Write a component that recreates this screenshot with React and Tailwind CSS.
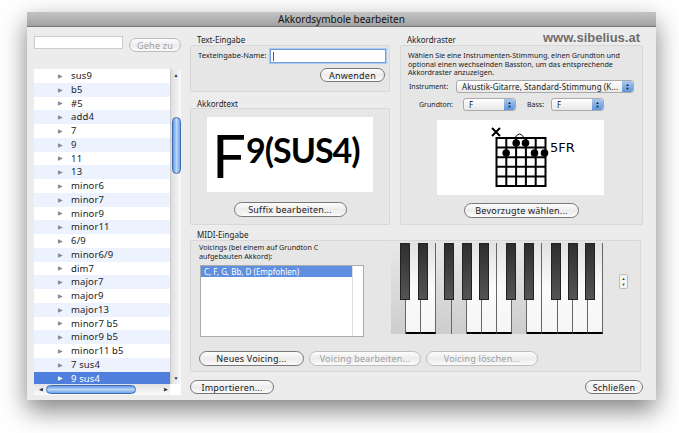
const akkorde = ["sus9", "b5", "#5", "add4", "7", "9", "11", "13", "minor6", "minor7", "minor9", "minor11", "6/9", "minor6/9", "dim7", "major7", "major9", "major13", "minor7 b5", "minor9 b5", "minor11 b5", "7 sus4", "9 sus4"];

const blackKeys = ["left-[9px]", "left-[27px]", "left-[53px]", "left-[71px]", "left-[88px]", "left-[115px]", "left-[133px]", "left-[160px]", "left-[177px]", "left-[194px]"];
const whiteKeys = [1, 0, 0, 1, 1, 0, 0, 0, 1, 0, 0, 0, 0, 0];

const Btn = ({ children, disabled, className = "" }) => (
  <div
    className={`flex items-center justify-center whitespace-nowrap rounded-full border bg-gradient-to-b from-[#fdfdfd] via-[#ececec] to-[#fbfbfb] text-[9px] tracking-[0.2px] leading-none ${disabled ? "border-[#bdbdbd] text-[#a0a0a0]" : "border-[#777] text-[#222]"} ${className}`}
  >
    {children}
  </div>
);

const Select = ({ children, className = "" }) => (
  <div className={`flex h-[13px] items-center justify-between rounded-[3px] border border-[#aaa] bg-gradient-to-b from-white to-[#e8e8e8] pl-[5px] text-[8px] tracking-[0.1px] leading-none text-[#222] ${className}`}>
    <span className="whitespace-nowrap">{children}</span>
    <span className="flex h-full w-[11px] shrink-0 flex-col items-center justify-center rounded-r-[3px] bg-gradient-to-b from-[#a9c8f0] to-[#5e94dc] text-[4px] leading-[4px] text-[#111]">
      <span>▲</span>
      <span>▼</span>
    </span>
  </div>
);

const Group = ({ className = "", children }) => (
  <div className={`rounded-[2px] border border-[#d8d8d8] bg-[#e6e6e6] ${className}`}>{children}</div>
);

const Griffbild = () => (
  <svg width="110" height="66" viewBox="-5 0 110 66">
    <path d="M21 3l8 8M29 3l-8 8" stroke="#000" strokeWidth="2" fill="none" />
    <path d="M44.500 12q4-6 8 0" stroke="#000" strokeWidth="1" fill="none" />
    <path d="M25.500 13h49v48h-49zM25.500 22.600h49M25.500 32.200h49M25.500 41.800h49M25.500 51.400h49M35.300 13v48M45.100 13v48M54.900 13v48M64.700 13v48" stroke="#000" strokeWidth="2" fill="none" />
    <circle cx="35.200" cy="28" r="3.800" />
    <circle cx="45.200" cy="18" r="3.800" />
    <circle cx="54.500" cy="18" r="3.800" />
    <circle cx="63.500" cy="28" r="3.800" />
    <circle cx="73.500" cy="28" r="3.800" />
    <text x="79" y="27" fontSize="13" fontFamily="DejaVu Sans, sans-serif">5FR</text>
  </svg>
);

export default function App() {
  return (
    <div className="h-[433px] w-[679px] overflow-hidden bg-white pl-[27px] pt-[12px] font-['Noto_Sans',sans-serif] text-[#222]">
      <div className="h-[388px] w-[629px] bg-[#ececec] shadow-[0_10px_24px_rgba(0,0,0,0.5)]">
        <div className="flex h-[15px] items-center justify-center border-b border-[#777] bg-gradient-to-b from-[#c4c4c4] to-[#a2a2a2] text-[10px] leading-none text-[#111]">
          Akkordsymbole bearbeiten
        </div>

        <div className="flex pl-[7px]">
          {/* Liste links */}
          <div className="w-[147px] shrink-0 pt-[9px]">
            <div className="flex items-start">
              <div className="h-[13px] w-[89px] border border-[#ccc] bg-white" />
              <Btn disabled className="ml-[6px] mt-[2px] h-[14px] w-[52px]">Gehe zu</Btn>
            </div>
            <div className="mt-[17px] flex h-[315px]">
              <div className="h-full w-[136px] bg-white">
                {akkorde.map((a, i) => (
                  <div
                    key={a}
                    className={`flex h-[13.75px] items-center pl-[24px] text-[9.500px] leading-none tracking-[0.1px] ${a === "9 sus4" ? "bg-[#4f7fdc] text-white" : i % 2 ? "bg-[#edf3fe] text-[#222]" : "bg-white text-[#222]"}`}
                  >
                    <span className={`mr-[8px] text-[6px] ${a === "9 sus4" ? "text-white" : "text-[#888]"}`}>▶</span>
                    {a}
                  </div>
                ))}
              </div>
              <div className="flex h-[315px] w-[11px] flex-col items-center border-l border-[#ccc] bg-gradient-to-r from-[#dedede] to-[#fafafa]">
                <span className="mt-[2px] text-[5px] leading-[8px] text-[#333]">▲</span>
                <div className="mt-[38px] h-[57px] w-[9px] rounded-full border border-[#3d6eb5] bg-gradient-to-r from-[#5f97e3] via-[#bcd6f6] to-[#6fa3e8]" />
                <span className="mt-auto mb-[2px] text-[5px] leading-[8px] text-[#333]">▼</span>
              </div>
            </div>
            <div className="flex h-[11px] w-[147px] items-center bg-white">
              <div className="flex h-full w-[136px] items-center bg-gradient-to-b from-[#e2e2e2] to-[#fbfbfb]">
                <span className="ml-[5px] text-[5px] leading-none text-[#333]">◀</span>
                <div className="ml-[3px] h-[9px] w-[90px] rounded-full border border-[#3d6eb5] bg-gradient-to-b from-[#5f97e3] via-[#bcd6f6] to-[#6fa3e8]" />
                <span className="ml-auto mr-[2px] text-[5px] leading-none text-[#333]">▶</span>
              </div>
            </div>
          </div>

          {/* rechte Seite */}
          <div className="ml-[9px] w-[453px] pt-[8px]">
            <div className="flex gap-[10px]">
              <div className="w-[200px]">
                <div className="h-[10px] pl-[7px] text-[8px] leading-[10px]">Text-Eingabe</div>
                <Group className="h-[47px]">
                  <div className="flex items-center pl-[7px] pt-[3px]">
                    <span className="w-[72px] whitespace-nowrap text-[7.500px] leading-none">Texteingabe-Name:</span>
                    <div className="flex h-[14px] w-[116px] items-center border border-[#6f9fdc] bg-white pl-[2px] shadow-[0_0_0_1px_#a9c8ee]">
                      <div className="h-[9px] w-px bg-[#555]" />
                    </div>
                  </div>
                  <div className="mt-[5px] flex justify-end pr-[4px]">
                    <Btn className="h-[14px] w-[65px]">Anwenden</Btn>
                  </div>
                </Group>
                <div className="mt-[7px] h-[9px] pl-[7px] text-[8px] leading-[9px]">Akkordtext</div>
                <Group className="h-[117px] px-[16px] pt-[8px]">
                  <div className="flex h-[75px] w-[166px] items-center overflow-hidden bg-white pl-[5px] font-['Lato',sans-serif] leading-none text-black">
                    <span className="text-[60px]">F</span>
                    <span className="-mt-[10px] text-[34px] font-bold tracking-[-1px]">9(SUS4)</span>
                  </div>
                  <div className="mt-[10px] flex justify-center">
                    <Btn className="h-[15px] w-[113px]">Suffix bearbeiten...</Btn>
                  </div>
                </Group>
              </div>

              <div className="w-[243px]">
                <div className="flex h-[10px] items-center justify-between pl-[7px] pr-[3px]">
                  <span className="text-[8px] leading-none">Akkordraster</span>
                  <span className="-mt-[5px] font-['Liberation_Sans',sans-serif] text-[13px] font-bold leading-none text-[#6e6e6e]">www.sibelius.at</span>
                </div>
                <Group className="h-[180px] px-[7px] pt-[5px]">
                  <p className="whitespace-nowrap text-[7.200px] leading-[8.700px]">
                    Wählen Sie eine Instrumenten-Stimmung, einen Grundton und
                    <br />
                    optional einen wechselnden Basston, um das entsprechende
                    <br />
                    Akkordraster anzuzeigen.
                  </p>
                  <div className="mt-[3px] flex items-center">
                    <span className="w-[48px] pl-[1px] text-[7px] leading-none">Instrument:</span>
                    <Select className="w-[178px]">Akustik-Gitarre, Standard-Stimmung (K...</Select>
                  </div>
                  <div className="mt-[5px] flex items-center">
                    <span className="w-[55px] pl-[11px] text-[7px] leading-none">Grundton:</span>
                    <Select className="w-[53px]">F</Select>
                    <span className="ml-[11px] w-[24px] text-[7px] leading-none">Bass:</span>
                    <Select className="w-[53px]">F</Select>
                  </div>
                  <div className="ml-[29px] mt-[9px] flex h-[75px] w-[167px] items-center justify-center bg-white">
                    <Griffbild />
                  </div>
                  <div className="mt-[8px] flex justify-center">
                    <Btn className="h-[15px] w-[115px]">Bevorzugte wählen...</Btn>
                  </div>
                </Group>
              </div>
            </div>

            <div className="mt-[5px] h-[10px] pl-[7px] text-[8px] leading-[10px]">MIDI-Eingabe</div>
            <Group className="flex h-[132px] w-[451px]">
              <div className="w-[200px] shrink-0 pl-[8px] pt-[2px]">
                <p className="text-[7.200px] leading-[8.500px]">
                  Voicings (bei einem auf Grundton C
                  <br />
                  aufgebauten Akkord):
                </p>
                <div className="ml-[1px] mt-[5px] flex h-[72px] w-[164px] border border-[#aaa] bg-white">
                  <div className="flex-1">
                    <div className="flex h-[11px] items-center bg-[#5f8fe0] pl-[3px] text-[8px] leading-none text-white">
                      C, F, G, Bb, D (Empfohlen)
                    </div>
                  </div>
                  <div className="w-[11px] border-l border-[#ddd]" />
                </div>
              </div>
              <div className="relative mt-[2px] h-[91px] w-[212px] shrink-0">
                <div className="flex h-full">
                  {whiteKeys.map((gedrueckt, i) => (
                    <div
                      key={i}
                      className={`h-full flex-1 border-r border-[#666] ${gedrueckt ? "bg-gradient-to-b from-[#e8e8e8] to-[#cdcdcd]" : "border-b-2 border-b-black bg-gradient-to-b from-[#e2e2e2] via-[#fbfbfb] to-[#f6f6f6]"}`}
                    />
                  ))}
                </div>
                {blackKeys.map((k) => (
                  <div key={k} className={`absolute top-0 h-[57px] w-[10px] border border-[#222] bg-gradient-to-b from-[#2e2e2e] to-[#555] ${k}`} />
                ))}
              </div>
              <div className="ml-[16px] mt-[33px] flex h-[15px] w-[9px] flex-col items-center justify-center gap-[1px] rounded-[2px] border border-[#bbb] bg-[#f5f5f5] text-[4px] leading-[5px] text-[#333]">
                <span>▲</span>
                <span>▼</span>
              </div>
            </Group>
            <div className="-mt-[21px] flex gap-[5px] pl-[9px]">
              <Btn className="h-[15px] w-[105px]">Neues Voicing...</Btn>
              <Btn disabled className="h-[15px] w-[112px]">Voicing bearbeiten...</Btn>
              <Btn disabled className="h-[15px] w-[112px]">Voicing löschen...</Btn>
            </div>
            <div className="mt-[14px] flex justify-between">
              <Btn className="h-[14px] w-[84px]">Importieren...</Btn>
              <Btn className="h-[14px] w-[58px]">Schließen</Btn>
            </div>
          </div>
        </div>
      </div>
    </div>
  );
}
